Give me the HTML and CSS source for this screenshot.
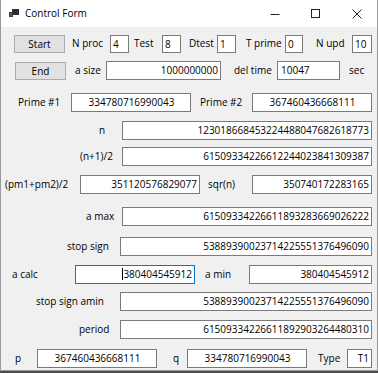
FILE: index.html
```html
<!DOCTYPE html>
<html lang="en">
<head>
  <meta charset="UTF-8">
  <title>Control Form</title>
  <link rel="stylesheet" href="styles.css">
</head>
<body>
  <div class="window">
    <div class="titlebar">
      <svg class="app-icon" width="10" height="8" viewBox="0 0 10 8">
        <rect x="3" y="0" width="7" height="6" fill="#2d2d2d"/>
        <rect x="0" y="3" width="4" height="5" fill="#3c3c3c"/>
        <rect x="1" y="4" width="2" height="3" fill="#5a5a5a"/>
      </svg>
      <span class="title">Control Form</span>
      <div class="caption-btns">
        <span class="cap"><svg width="10" height="10" viewBox="0 0 10 10"><path d="M0.5 5.5h9" stroke="#222" stroke-width="1"/></svg></span>
        <span class="cap"><svg width="10" height="10" viewBox="0 0 10 10"><rect x="0.5" y="0.5" width="8" height="8" fill="none" stroke="#222" stroke-width="1"/></svg></span>
        <span class="cap"><svg width="10" height="10" viewBox="0 0 10 10"><path d="M0.5 0.5l9 9M9.5 0.5l-9 9" stroke="#222" stroke-width="1"/></svg></span>
      </div>
    </div>

    <div class="form">
      <div class="row row-start">
        <div class="btn btn-start">Start</div>
        <span class="lbl l-nproc">N proc</span>
        <div class="tb tb-small">4</div>
        <span class="lbl l-test">Test</span>
        <div class="tb tb-small">8</div>
        <span class="lbl l-dtest">Dtest</span>
        <div class="tb tb-small">1</div>
        <span class="lbl l-tprime">T prime</span>
        <div class="tb tb-small tb-tprime">0</div>
        <span class="lbl l-nupd">N upd</span>
        <div class="tb tb-small tb-nupd">10</div>
      </div>

      <div class="row row-end">
        <div class="btn btn-end">End</div>
        <span class="lbl l-asize">a size</span>
        <div class="tb right tb-asize">1000000000</div>
        <span class="lbl l-deltime">del time</span>
        <div class="tb tb-deltime">10047</div>
        <span class="lbl l-sec">sec</span>
      </div>

      <div class="row row-prime">
        <span class="lbl l-prime1">Prime #1</span>
        <div class="tb center w120">334780716990043</div>
        <span class="lbl l-prime2">Prime #2</span>
        <div class="tb center w120">367460436668111</div>
      </div>

      <div class="row row-n">
        <span class="lbl l-n">n</span>
        <div class="tb right w250">123018668453224488047682618773</div>
      </div>

      <div class="row row-n1">
        <span class="lbl l-n1">(n+1)/2</span>
        <div class="tb right w250">61509334226612244023841309387</div>
      </div>

      <div class="row row-pm">
        <span class="lbl l-pm">(pm1+pm2)/2</span>
        <div class="tb right w120">351120576829077</div>
        <span class="lbl l-sqr">sqr(n)</span>
        <div class="tb right w120">350740172283165</div>
      </div>

      <div class="row row-amax">
        <span class="lbl l-amax">a max</span>
        <div class="tb right w250">61509334226611893283669026222</div>
      </div>

      <div class="row row-stop">
        <span class="lbl l-stop">stop sign</span>
        <div class="tb right w252">53889390023714225551376496090</div>
      </div>

      <div class="row row-acalc">
        <span class="lbl l-acalc">a calc</span>
        <div class="tb right w120 focused"><span class="caret"></span>380404545912</div>
        <span class="lbl l-amin">a min</span>
        <div class="tb right w123">380404545912</div>
      </div>

      <div class="row row-stopamin">
        <span class="lbl l-stopamin">stop sign amin</span>
        <div class="tb right w252">53889390023714225551376496090</div>
      </div>

      <div class="row row-period">
        <span class="lbl l-period">period</span>
        <div class="tb right w252">61509334226611892903264480310</div>
      </div>

      <div class="row row-pq">
        <span class="lbl l-p">p</span>
        <div class="tb center w120">367460436668111</div>
        <span class="lbl l-q">q</span>
        <div class="tb center w120">334780716990043</div>
        <span class="lbl l-type">Type</span>
        <div class="tb right tb-type">T1</div>
      </div>
    </div>
  </div>
</body>
</html>
```

FILE: styles.css
```css
html, body {
  margin: 0;
  padding: 0;
  background-color: #4d4d4d;
  font-family: "Open Sans", "Noto Sans", sans-serif;
  font-size: 10px;
  color: #000;
}
.window {
  width: 376px;
  height: 370px;
  background-color: #f0f0f0;
  border: 1px solid #9a9a9a;
  border-top: none;
}

/* title bar */
.titlebar {
  height: 27px;
  background-color: #fff;
  display: flex;
  align-items: center;
}
.app-icon {
  margin-left: 8px;
  margin-top: -1px;
}
.title {
  margin-left: 6px;
  font-size: 10px;
  margin-top: -1px;
}
.caption-btns {
  margin-left: auto;
  display: flex;
}
.cap {
  width: 41px;
  height: 27px;
  display: flex;
  align-items: center;
  justify-content: center;
}

/* form rows */
.row {
  display: flex;
  align-items: center;
  height: 19px;
}
.row-start    { margin-top: 7px; }
.row-end      { margin-top: 8px; }
.row-prime    { margin-top: 13px; }
.row-n        { margin-top: 9px; }
.row-n1       { margin-top: 7px; }
.row-pm       { margin-top: 9px; }
.row-amax     { margin-top: 13px; }
.row-stop     { margin-top: 11px; }
.row-acalc    { margin-top: 9px; }
.row-stopamin { margin-top: 8px; }
.row-period   { margin-top: 9px; }
.row-pq       { margin-top: 10px; }

.btn {
  box-sizing: border-box;
  width: 51px;
  height: 18px;
  background-color: #e1e1e1;
  border: 1px solid #adadad;
  text-align: center;
  line-height: 16px;
}
.btn-start { margin-left: 13px; }
.btn-end   { margin-left: 14px; }

.lbl {
  flex: none;
  white-space: nowrap;
  margin-top: -1px;
}

.tb {
  flex: none;
  box-sizing: border-box;
  height: 19px;
  background-color: #fff;
  border: 1px solid #7a7a7a;
  padding: 0 2px 0 3px;
  line-height: 17px;
  white-space: nowrap;
  overflow: hidden;
}
.tb.right  { text-align: right; }
.tb.center { text-align: center; }
.tb.focused { border-color: #0078d7; }
.caret {
  display: inline-block;
  width: 1px;
  height: 12px;
  background-color: #000;
  vertical-align: -2px;
}
.tb-small  { width: 19px; height: 18px; line-height: 16px; padding: 0 0 0 2px; }
.tb-tprime { width: 18px; }
.tb-nupd   { width: 20px; }
.tb-asize  { width: 115px; }
.tb-deltime { width: 63px; }
.tb-type   { width: 25px; }
.w120 { width: 120px; }
.w123 { width: 123px; }
.w250 { width: 250px; }
.w252 { width: 252px; }

.l-nproc    { margin-left: 7px;  width: 38px; }
.l-test     { margin-left: 5px;  width: 28px; }
.l-dtest    { margin-left: 8px;  width: 28px; }
.l-tprime   { margin-left: 10px; width: 39px; }
.l-nupd     { margin-left: 13px; width: 36px; }
.l-asize    { margin-left: 9px;  width: 31px; }
.l-deltime  { margin-left: 13px; width: 43px; }
.l-sec      { margin-left: 9px; }
.l-prime1   { margin-left: 17px; width: 53px; }
.l-prime2   { margin-left: 9px;  width: 52px; }
.l-n        { margin-left: 98px; width: 23px; }
.l-n1       { margin-left: 79px; width: 42px; }
.l-pm       { margin-left: 4px;  width: 75px; }
.l-sqr      { margin-left: 8px;  width: 44px; }
.l-amax     { margin-left: 85px; width: 36px; }
.l-stop     { margin-left: 66px; width: 53px; }
.l-acalc    { margin-left: 11px; width: 63px; }
.l-amin     { margin-left: 10px; width: 44px; }
.l-stopamin { margin-left: 35px; width: 84px; }
.l-period   { margin-left: 78px; width: 41px; }
.l-p        { margin-left: 14px; width: 22px; }
.l-q        { margin-left: 16px; width: 14px; }
.l-type     { margin-left: 11px; width: 29px; }
```
